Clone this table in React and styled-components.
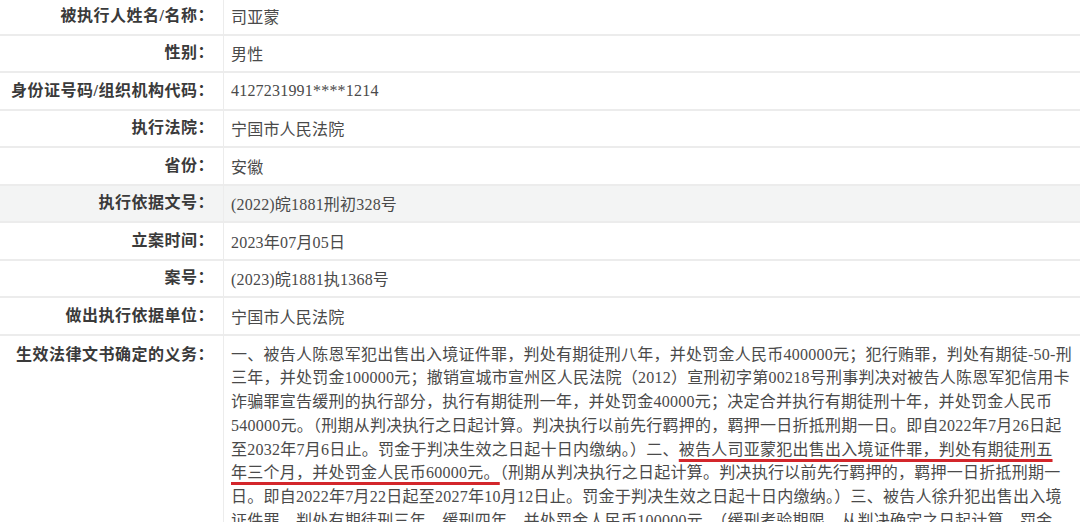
import React from "react";
import styled, { createGlobalStyle } from "styled-components";

const Global = createGlobalStyle`
  html, body { margin: 0; padding: 0; background: #ffffff; }
  body {
    font-family: "Liberation Serif", "Noto Sans CJK SC", serif;
    overflow: hidden;
  }
`;

const Table = styled.div`
  margin-top: -2px;
  width: 1080px;
  display: flex;
  flex-direction: column;
`;

const Row = styled.div`
  display: grid;
  grid-template-columns: 224px 1fr;
  border-bottom: 2px solid #ececec;
  background: ${(p) => (p.$shaded ? "#f3f4f4" : "#ffffff")};
`;

const Label = styled.div`
  display: flex;
  justify-content: flex-end;
  align-items: ${(p) => (p.$top ? "flex-start" : "center")};
  min-height: 35.5px;
  padding: ${(p) => (p.$top ? "7px 9px 0 0" : "0 9px 0 0")};
  line-height: 23.8px;
  border-right: 1.5px solid #ececec;
  font-size: 16px;
  font-weight: 700;
  letter-spacing: 0.5px;
  color: #3a3a3a;
  white-space: nowrap;
`;

const Value = styled.div`
  display: flex;
  align-items: center;
  min-height: 35.5px;
  padding: 0 0 0 7px;
  font-size: 16px;
  letter-spacing: 0.2px;
  color: #4a4a4a;
  white-space: nowrap;
`;

const Duty = styled.div`
  padding: 7px 4px 0 7px;
  font-size: 16px;
  line-height: 23.8px;
  letter-spacing: 0.25px;
  color: #4a4a4a;
  white-space: nowrap;
  height: 180px;
  overflow: hidden;
`;

const Mark = styled.span`
  text-decoration: underline;
  text-decoration-color: #d3262b;
  text-decoration-thickness: 2.5px;
  text-underline-offset: 4px;
`;

const rows = [
  ["被执行人姓名/名称：", "司亚蒙"],
  ["性别：", "男性"],
  ["身份证号码/组织机构代码：", "4127231991****1214"],
  ["执行法院：", "宁国市人民法院"],
  ["省份：", "安徽"],
  ["执行依据文号：", "(2022)皖1881刑初328号", true],
  ["立案时间：", "2023年07月05日"],
  ["案号：", "(2023)皖1881执1368号"],
  ["做出执行依据单位：", "宁国市人民法院"],
];

export default function App() {
  return (
    <>
      <Global />
      <Table>
        {rows.map(([label, value, shaded]) => (
          <Row key={label} $shaded={shaded}>
            <Label>{label}</Label>
            <Value>{value}</Value>
          </Row>
        ))}
        <Row>
          <Label $top>生效法律文书确定的义务：</Label>
          <Duty>
            一、被告人陈恩军犯出售出入境证件罪，判处有期徒刑八年，并处罚金人民币400000元；犯行贿罪，判处有期徒-50-刑
            <br />
            三年，并处罚金100000元；撤销宣城市宣州区人民法院（2012）宣刑初字第00218号刑事判决对被告人陈恩军犯信用卡
            <br />
            诈骗罪宣告缓刑的执行部分，执行有期徒刑一年，并处罚金40000元；决定合并执行有期徒刑十年，并处罚金人民币
            <br />
            540000元。（刑期从判决执行之日起计算。判决执行以前先行羁押的，羁押一日折抵刑期一日。即自2022年7月26日起
            <br />
            至2032年7月6日止。罚金于判决生效之日起十日内缴纳。）二、<Mark>被告人司亚蒙犯出售出入境证件罪，判处有期徒刑五</Mark>
            <br />
            <Mark>年三个月，并处罚金人民币60000元。</Mark>（刑期从判决执行之日起计算。判决执行以前先行羁押的，羁押一日折抵刑期一
            <br />
            日。即自2022年7月22日起至2027年10月12日止。罚金于判决生效之日起十日内缴纳。）三、被告人徐升犯出售出入境
            <br />
            证件罪，判处有期徒刑三年，缓刑四年，并处罚金人民币100000元。（缓刑考验期限，从判决确定之日起计算。罚金
          </Duty>
        </Row>
      </Table>
    </>
  );
}
